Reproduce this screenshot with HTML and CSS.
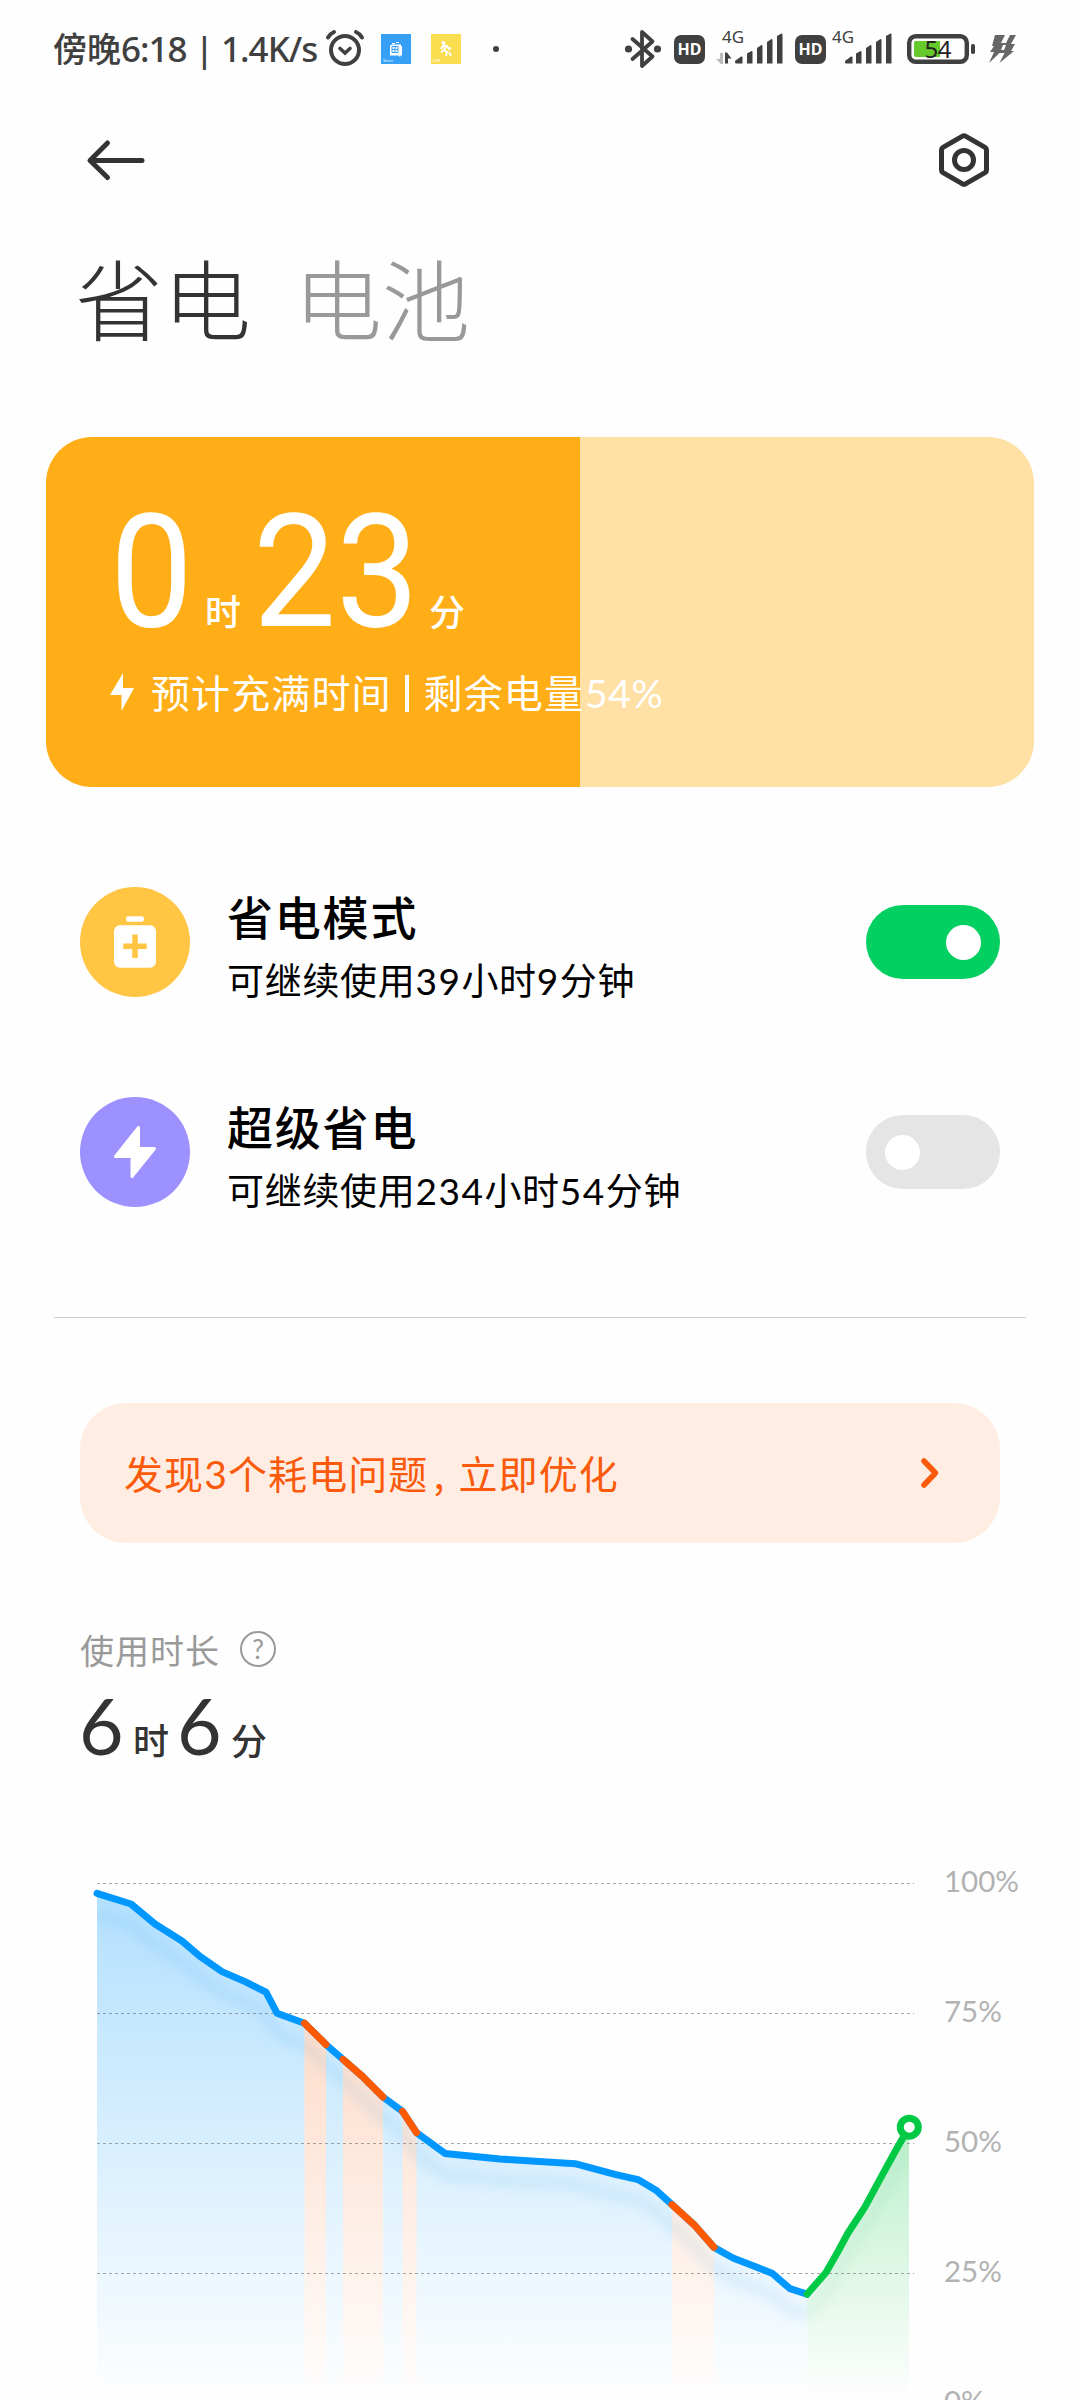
FILE: index.html
```html
<!DOCTYPE html>
<html lang="zh-CN">
<head>
<meta charset="utf-8">
<title>省电与电池</title>
<link rel="stylesheet" href="styles.css">
</head>
<body>
<div class="screen">
  <header class="status">
    <span class="status-time">傍晚<span class="status-num">6:18 | 1.4K/s</span></span>
    <svg class="alarm" width="40" height="38" viewBox="0 0 40 38" fill="none" stroke="#404040" stroke-linecap="round"><circle cx="20" cy="21" r="14" stroke-width="4"/><path d="M15 19.500l5 4.500 5-4.500" stroke-width="3.600"/><path d="M3 8.500Q5.500 4.500 9 3M37 8.500Q34.500 4.500 31 3" stroke-width="4"/></svg>
    <svg class="app-blue" width="30" height="30" viewBox="0 0 30 30"><path fill="#35a0f5" d="M0 0h30v30H0z"/><path fill="#fff" d="M9 11.500l2-1h9v1.500h1v9.500h-1.500v1H18v-1H9z"/><path d="M11 9.500h3M15 8.500h3" fill="none" stroke="#fff"/><path d="M11 15.500h6M14 12.500v6M11 12.500h6v6h-6z" stroke="#35a0f5" fill="none"/><text x="2" y="28" class="tiny">Store</text></svg>
    <svg class="app-yellow" width="30" height="30" viewBox="0 0 30 30"><path fill="#fbdd50" d="M0 0h30v30H0z"/><circle cx="12.500" cy="9" r="1.900" fill="#fff"/><path d="M10 15l2-3 4 0 2 3 2-1M15 12l-2 4 3 2-1 4M12 17l-2 1M18 18l2 4" fill="none" stroke="#fff" stroke-width="2"/><text x="2" y="28" class="tiny">LIFE</text></svg>
    <span class="dot"></span>
    <svg class="bt" width="36" height="40" viewBox="0 0 36 40" fill="none" stroke="#404040" stroke-width="3.800" stroke-linejoin="round" stroke-linecap="round"><path d="M7.500 10l20 17.500L17 37V3l10.500 9.500L7.500 30"/><circle cx="3.500" cy="20" r="1.700"/><circle cx="32.500" cy="20" r="1.700"/></svg>
    <span class="hd hd-first">HD</span>
    <svg class="signal signal-first" width="68" height="34" viewBox="0 0 68 34" fill="#404040"><text x="6" y="13" class="net">4G</text><path class="fade" d="M7 23v11h-2L0 29h4v-6z"/><path d="M9 33.500v-11h2l4.500 6H12v5z"/><path d="M19 31l6-4.500q1.500-.5 1.500 1V33.500h-6q-1.500 0-1.500-1.500zM31 23.500l4.500-2.500q1 0 1 1V33.500H31zM41 18l4.500-3q1 0 1 1V33.500H41zM51 12l4.500-3q1 0 1 1V33.500H51zM61 6l4.500-2.500q1 0 1 1V33.500H61z"/></svg>
    <span class="hd hd-second">HD</span>
    <svg class="signal signal-second" width="62" height="34" viewBox="6 0 62 34" fill="#404040"><text x="6" y="13" class="net">4G</text><path d="M19 31l6-4.500q1.500-.5 1.500 1V33.500h-6q-1.500 0-1.500-1.500zM30 23.500l4.500-2.500q1 0 1 1V33.500H30zM40 18l4.500-3q1 0 1 1V33.500H40zM50 12l4.500-3q1 0 1 1V33.500H50zM60 6l4.500-2.500q1 0 1 1V33.500H60z"/></svg>
    <svg class="cell" width="68" height="30" viewBox="0 0 68 30"><rect x="2.200" y="2.200" width="57.600" height="25.600" rx="6.500" fill="none" stroke="#404040" stroke-width="4.400"/><rect x="64" y="10" width="4" height="10" rx="1.800" fill="#404040"/><path d="M9 7h24v16H9q-2 0-2-2V9q0-2 2-2z" fill="#66c92c"/><text x="17.500" y="24" class="cell-text" textLength="27">54</text></svg>
    <svg class="flash" width="28" height="29" viewBox="0 0 28 29" fill="#666"><path d="M6 0h10l-4 8h5l4-8-3 0h9l-5 9h4l-4 7h3L10.500 28l5-10h-5L0 28 5 17H1l4-6H3z"/><path d="M14 10l-2 5h3l2-5z" fill="#fefefe"/></svg>
  </header>

  <nav class="topbar">
    <svg width="58" height="40" viewBox="0 0 58 40" fill="none" stroke="#333" stroke-width="5" stroke-linecap="round" stroke-linejoin="round"><path d="M19.500 3L2 20.500 19.500 37.500M2.500 20.500H54"/></svg>
    <svg width="50" height="54" viewBox="0 0 50 54" fill="none" stroke="#333" stroke-width="5" stroke-linejoin="round"><path d="M23.500 3.200q1.500-.9 3 0L46 14.300q1.500.9 1.500 2.500V37.200q0 1.600-1.500 2.500L26.500 50.800q-1.500.9-3 0L4 39.700q-1.500-.9-1.500-2.500V16.800q0-1.600 1.500-2.500z"/><circle cx="25" cy="27" r="9.500"/></svg>
  </nav>

  <div class="tabs"><h1 class="tab active">省电</h1><h1 class="tab">电池</h1></div>

  <section class="battery-card" style="--level:54%">
    <div class="remain"><span class="big">0</span><span class="unit">时</span><span class="big two">23</span><span class="unit last">分</span></div>
    <div class="charge"><svg width="24" height="38" viewBox="0 0 24 38" fill="#fff"><path d="M13 0v15h11L11.500 38V22H0z"/></svg><span class="charge-text">预计充满时间<span class="bar"></span>剩余电量<span class="pct">54%</span></span></div>
  </section>

  <section class="modes">
    <div class="mode">
      <svg class="mode-icon" width="110" height="110" viewBox="0 0 110 110"><circle cx="55" cy="55" r="55" fill="#ffc543"/><rect x="46" y="29.300" width="18" height="5.500" rx="2.200" fill="#fff"/><rect x="34" y="38.300" width="42" height="42.500" rx="6" fill="#fff"/><path d="M46 59.300h18M55 50.300v18" stroke="#ffc543" stroke-width="5.500" stroke-linecap="square"/></svg>
      <div class="mode-text"><h2>省电模式</h2><p>可继续使用<span>39</span>小时<span>9</span>分钟</p></div>
      <span class="switch on"></span>
    </div>
    <div class="mode">
      <svg class="mode-icon" width="110" height="110" viewBox="0 0 110 110"><circle cx="55" cy="55" r="55" fill="#9d91ff"/><path d="M58.500 30.500V51.500H74.500L52 79.500V59.500H35.500z" fill="#fff" stroke="#fff" stroke-width="3" stroke-linejoin="round"/></svg>
      <div class="mode-text"><h2>超级省电</h2><p>可继续使用<span>234</span>小时<span>54</span>分钟</p></div>
      <span class="switch"></span>
    </div>
  </section>

  <div class="divider"></div>

  <div class="banner"><span class="banner-text">发现<span class="n">3</span>个耗电问题<span class="comma">,</span>立即优化</span><svg width="20" height="32" viewBox="0 0 20 32" fill="none" stroke="#fa5a0a" stroke-width="5.500" stroke-linecap="round" stroke-linejoin="round"><path d="M4 4l11.500 12L4 28"/></svg></div>

  <section class="usage">
    <div class="usage-label">使用时长<span class="help">?</span></div>
    <div class="usage-time"><span class="num">6</span><span class="unit">时</span><span class="num">6</span><span class="unit">分</span></div>
  </section>

  <section class="chart">
    <svg width="840" height="530" viewBox="90 1870 840 530">
      <defs>
        <linearGradient id="gb" gradientUnits="userSpaceOnUse" x1="0" y1="1886" x2="0" y2="2400"><stop stop-color="#0099ff" stop-opacity=".3"/><stop offset="1" stop-color="#0099ff" stop-opacity="0"/></linearGradient>
        <linearGradient id="go" gradientUnits="userSpaceOnUse" x1="0" y1="1886" x2="0" y2="2400"><stop stop-color="#ff5a00" stop-opacity=".28"/><stop offset="1" stop-color="#ff5a00" stop-opacity="0"/></linearGradient>
        <linearGradient id="gg" gradientUnits="userSpaceOnUse" x1="0" y1="2127" x2="0" y2="2400"><stop stop-color="#00c840" stop-opacity=".26"/><stop offset="1" stop-color="#00c840" stop-opacity="0"/></linearGradient>
        <clipPath id="area"><path d="M97 1893.400L131 1904 155 1924 182 1941 200 1956.400 222 1971.600 245 1981.600 266 1992.200 277 2013.200 304.500 2023.200 326 2044.600 343 2059.400 362 2076 383 2097 402.500 2111.400 416.500 2132.700 445 2153.400 500 2159 575 2163.700 615 2174.400 638 2179.600 656 2190.200 672 2204.700 695 2225.700 714 2247.400 733 2258 772 2273.200 790 2288.700 807 2294.200 826 2272.500 838 2251.500 848 2233 865 2206.800 880 2179.200 896 2150 909 2127.200V2400H97z"/></clipPath>
        <filter id="soft" filterUnits="userSpaceOnUse" x="60" y="1860" width="880" height="540"><feGaussianBlur stdDeviation="6"/></filter>
      </defs>
      <g clip-path="url(#area)">
        <path fill="url(#gb)" d="M97 1880H304.500V2400H97zM326 1880H343V2400H326zM383 1880H402.500V2400H383zM416.500 1880H672V2400H416.500zM714 1880H807V2400H714z"/>
        <path fill="url(#go)" d="M304.500 1880H326V2400H304.500zM343 1880H383V2400H343zM402.500 1880H416.500V2400H402.500zM672 1880H714V2400H672z"/>
        <path fill="url(#gg)" d="M807 2100H909V2400H807z"/>
        <g fill="none" stroke-width="11" filter="url(#soft)" transform="translate(0 21)">
          <path stroke="#0088dd" stroke-opacity=".1" d="M97 1893.400L131 1904 155 1924 182 1941 200 1956.400 222 1971.600 245 1981.600 266 1992.200 277 2013.200 304.500 2023.200 326 2044.600 343 2059.400 362 2076 383 2097 402.500 2111.400 416.500 2132.700 445 2153.400 500 2159 575 2163.700 615 2174.400 638 2179.600 656 2190.200 672 2204.700 695 2225.700 714 2247.400 733 2258 772 2273.200 790 2288.700 807 2294.200"/>
          <path stroke="#00a040" stroke-opacity=".06" d="M807 2294.200L826 2272.500 838 2251.500 848 2233 865 2206.800 880 2179.200 896 2150 909 2127.200"/>
        </g>
      </g>
      <path fill="none" stroke="#777" stroke-opacity=".65" stroke-width="1" stroke-dasharray="3 3" d="M97 1883.500H914M97 2013.500H914M97 2143.500H914M97 2273.500H914"/>
      <g fill="none" stroke-width="7" stroke-linecap="round" stroke-linejoin="round">
        <path stroke="#0097ff" d="M97 1893.400L131 1904 155 1924 182 1941 200 1956.400 222 1971.600 245 1981.600 266 1992.200 277 2013.200 304.500 2023.200 326 2044.600 343 2059.400 362 2076 383 2097 402.500 2111.400 416.500 2132.700 445 2153.400 500 2159 575 2163.700 615 2174.400 638 2179.600 656 2190.200 672 2204.700 695 2225.700 714 2247.400 733 2258 772 2273.200 790 2288.700 807 2294.200"/>
        <path stroke="#ff5a00" d="M304.500 2023.200L326 2044.600M343 2059.400L362 2076 383 2097M402.500 2111.400L416.500 2132.700M672 2204.700L695 2225.700 714 2247.400"/>
        <path stroke="#00ca45" d="M807 2294.200L826 2272.500 838 2251.500 848 2233 865 2206.800 880 2179.200 896 2150 909 2127.200"/>
      </g>
      <circle cx="909.300" cy="2127.200" r="9" fill="#fff" stroke="#00ca45" stroke-width="7"/>
    </svg>
    <div class="axis"><span>100%</span><span>75%</span><span>50%</span><span>25%</span><span>0%</span></div>
  </section>
</div>
</body>
</html>
```
FILE: styles.css
```css
* { box-sizing: border-box; margin: 0; padding: 0; }
body { background: #fefefe; }
.screen {
  width: 1080px; height: 2400px; overflow: hidden; background: #fefefe;
  display: flex; flex-direction: column;
  font-family: "Lato", "Noto Sans CJK SC", sans-serif; color: #000;
}
.screen > * { flex: none; }
h1, h2 { font-weight: 400; }
svg { flex: none; display: block; overflow: visible; }

.status { height: 98px; padding-left: 53px; display: flex; align-items: center; color: #404040; white-space: nowrap; }
.status-time { width: 272px; font-size: 34px; font-weight: 500; line-height: 40px; font-family: "Noto Sans CJK SC", sans-serif; margin-top: -2px; }
.status-num { font-family: "Noto Sans", sans-serif; font-size: 35px; font-weight: 500; letter-spacing: -1px; }
.alarm { margin-top: -2px; }
.app-blue { margin-left: 16px; }
.app-yellow { margin-left: 20px; }
.tiny { font: 4px "Noto Sans", sans-serif; fill: #fff; }
.dot { width: 6px; height: 6px; border-radius: 50%; background: #404040; margin-left: 32px; }
.bt { margin-left: 126px; }
.hd { width: 31px; height: 29px; border-radius: 7px; background: #404040; color: #fff; font: 700 16px/29px "Noto Sans", sans-serif; text-align: center; }
.hd-first { margin-left: 13px; }
.signal-first { margin-left: 11px; }
.hd-second { margin-left: 11px; }
.signal-second { margin-left: 6px; }
.signal { margin-top: -4px; }
.fade { fill: #bbb; }
.net { font: 400 17px "Noto Sans", sans-serif; }
.cell { margin-left: 13px; }
.cell-text { font: 400 24px "Noto Sans", sans-serif; fill: #222; }
.flash { margin-left: 14px; }

.topbar { height: 124px; padding: 0 91px 0 88px; display: flex; justify-content: space-between; align-items: center; }

.tabs { height: 215px; padding: 14px 0 0 75px; display: flex; gap: 43px; }
.tab { font-family: "Noto Sans CJK SC", sans-serif; font-weight: 300; font-size: 88px; line-height: 120px; color: #999; white-space: nowrap; }
.tab.active { color: #333; }

.battery-card {
  height: 350px; margin: 0 46px; border-radius: 46px; color: #fff;
  background: linear-gradient(90deg, #ffae17 var(--level), #ffe0a5 var(--level));
  padding: 55px 0 0 64px;
}
.remain { display: flex; align-items: baseline; height: 160px; line-height: 160px; }
.big { font-family: "Roboto", sans-serif; font-size: 157px; width: 95px; transform: scaleX(.94); transform-origin: left; }
.big.two { width: 176px; }
.remain .unit { width: 48px; }
.unit { font-family: "Noto Sans CJK SC", sans-serif; font-size: 36px; font-weight: 500; }
.charge { display: flex; align-items: center; height: 56px; margin-top: 12px; gap: 17px; font-size: 39px; letter-spacing: 1.100px; font-family: "Noto Sans CJK SC", sans-serif; white-space: nowrap; }
.charge-text { margin-top: -3px; }
.bar { display: inline-block; width: 4px; height: 37px; background: #fff; margin: 0 15px 0 13px; vertical-align: -4px; }
.pct { font-family: "Lato", sans-serif; letter-spacing: .6px; margin-left: 1px; }

.modes { padding: 50px 80px 0; }
.mode { height: 210px; display: flex; align-items: center; }
.mode-text { flex: 1; padding: 10px 0 0 37px; font-family: "Noto Sans CJK SC", sans-serif; white-space: nowrap; }
.mode-text h2 { font-size: 46px; font-weight: 500; line-height: 62px; letter-spacing: 1.800px; }
.mode-text p { font-size: 37px; line-height: 60px; margin-top: 3px; letter-spacing: .7px; }
.mode-text p span { font-family: "Lato", sans-serif; letter-spacing: 1.500px; }
.switch { width: 134px; height: 74px; border-radius: 37px; background: #e5e5e5; display: flex; align-items: center; padding: 0 19px; }
.switch::before { content: ""; width: 35px; height: 35px; border-radius: 50%; background: #fff; }
.switch.on { background: #04d062; justify-content: flex-end; }

.divider { height: 1px; margin: 60px 54px 0; background: #ccc; }
.banner {
  height: 140px; margin: 85px 80px 0; padding: 0 60px 0 44px; border-radius: 46px; background: #ffede4;
  display: flex; align-items: center; justify-content: space-between;
  color: #fa5a0a; font: 39px "Noto Sans CJK SC", sans-serif; letter-spacing: 1.100px; white-space: nowrap;
}
.banner-text { margin-top: -3px; }
.banner .n { font-family: "Lato", sans-serif; }
.comma { display: inline-block; width: 30px; padding-left: 5px; }

.usage { padding: 80px 80px 0; }
.usage-label { height: 52px; display: flex; align-items: center; color: #999; font: 34px "Noto Sans CJK SC", sans-serif; letter-spacing: 1px; }
.help { width: 36px; height: 36px; border: 2px solid #999; border-radius: 50%; margin-left: 20px; font: 26px/32px "Lato", sans-serif; text-align: center; letter-spacing: 0; }
.usage-time { display: flex; align-items: baseline; height: 80px; line-height: 80px; margin-top: 10px; color: #333; }
.num { font-family: "Lato", sans-serif; font-size: 77px; width: 53px; text-indent: -1px; }
.usage-time .unit { width: 45px; }

.chart { height: 530px; margin-top: 105px; padding-left: 90px; display: flex; }
.axis { padding: 0 0 0 14px; font: 29.500px/130px "Lato", sans-serif; color: #b2b2b2; margin-top: -54px; display: flex; flex-direction: column; }
```
